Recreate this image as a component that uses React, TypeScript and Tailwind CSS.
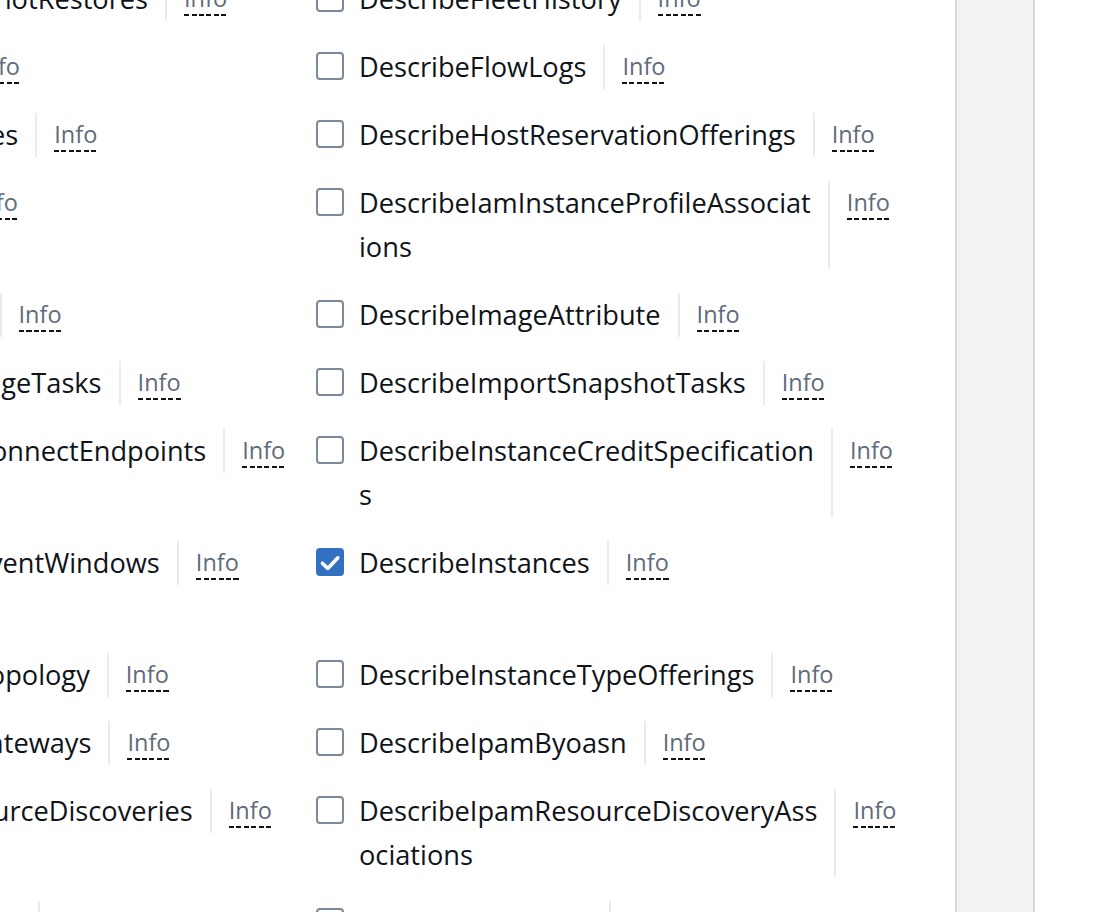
// "|" marks where the reference wraps a long action name
const rows: string[][] = [
  ["DescribeFastLaunchImages", "DescribeFastSnapshotRestores", "DescribeFleetHistory"],
  ["DescribeFleetInstances", "DescribeFleets", "DescribeFlowLogs"],
  ["DescribeFpgaImageAttribute", "DescribeFpgaImages", "DescribeHostReservationOfferings"],
  ["DescribeHostReservations", "DescribeHosts", "DescribeIamInstanceProfileAssociat|ions"],
  ["DescribeIdentityIdFormat", "DescribeIdFormat", "DescribeImageAttribute"],
  ["DescribeImages", "DescribeImportImageTasks", "DescribeImportSnapshotTasks"],
  ["DescribeInstanceAttribute", "DescribeInstanceConnectEndpoints", "DescribeInstanceCreditSpecification|s"],
  ["DescribeInstanceEventNotificatio|nAttributes", "DescribeInstanceEventWindows", "DescribeInstances"],
  ["DescribeInstanceStatus", "DescribeInstanceTopology", "DescribeInstanceTypeOfferings"],
  ["DescribeInstanceTypes", "DescribeInternetGateways", "DescribeIpamByoasn"],
  ["DescribeIpamPools", "DescribeIpamResourceDiscoveries", "DescribeIpamResourceDiscoveryAss|ociations"],
  ["DescribeIpams", "DescribeIpamScopes", "DescribeIpv6Pools"],
]

const checked = ["DescribeInstances"]

function Checkbox({ on }: { on: boolean }) {
  if (on) {
    return (
      <span className="mt-[7px] block h-7 w-7 shrink-0 rounded-[4px] bg-[#3270c2]">
        <svg viewBox="0 0 14 14" className="h-7 w-7" fill="none">
          <path d="M3.2 7.6 L5.9 10.2 L10.9 4.9" stroke="white" strokeWidth="1.8" strokeLinecap="round" strokeLinejoin="round" />
        </svg>
      </span>
    )
  }
  return <span className="mt-[7px] block h-7 w-7 shrink-0 rounded-[4px] border-2 border-[#7d8998] bg-white" />
}

function Action({ name }: { name: string }) {
  const lines = name.split("|")
  const plain = lines.join("")
  return (
    <div className="flex items-start">
      <Checkbox on={checked.includes(plain)} />
      <div className="ml-[15px] flex">
        <span className="max-w-[470px] break-all text-[27.2px] leading-[44px] text-[#0f141a]">
          {lines.map((l, i) => (
            <span key={i}>
              {i > 0 && <br />}
              {l}
            </span>
          ))}
        </span>
        <div className="ml-[17px] shrink-0 border-l-2 border-[#e9ebed] pl-[17px]">
          <span className="mt-[6px] block bg-[repeating-linear-gradient(90deg,#0f141a_0_5px,transparent_5px_7.5px)] bg-[length:100%_2px] bg-bottom bg-no-repeat pb-[3px] text-[23.5px] leading-[30px] text-[#5f6b7a]">
            Info
          </span>
        </div>
      </div>
    </div>
  )
}

export default function App() {
  return (
    <div className="flex h-[912px] w-full overflow-hidden bg-white font-['Open_Sans',sans-serif]">
      <div className="w-[955px] shrink-0 overflow-hidden">
        <div className="-mt-[23px] -ml-[890px] grid grid-cols-[600px_600px_600px] gap-x-[3px] gap-y-[24px]">
          {rows.flat().map((name, i) => (
            <Action key={i} name={name} />
          ))}
        </div>
      </div>
      <div className="w-[80px] shrink-0 border-x-2 border-[#d5d9da] bg-[#f1f2f2]" />
      <div className="flex-1 bg-white" />
    </div>
  )
}
